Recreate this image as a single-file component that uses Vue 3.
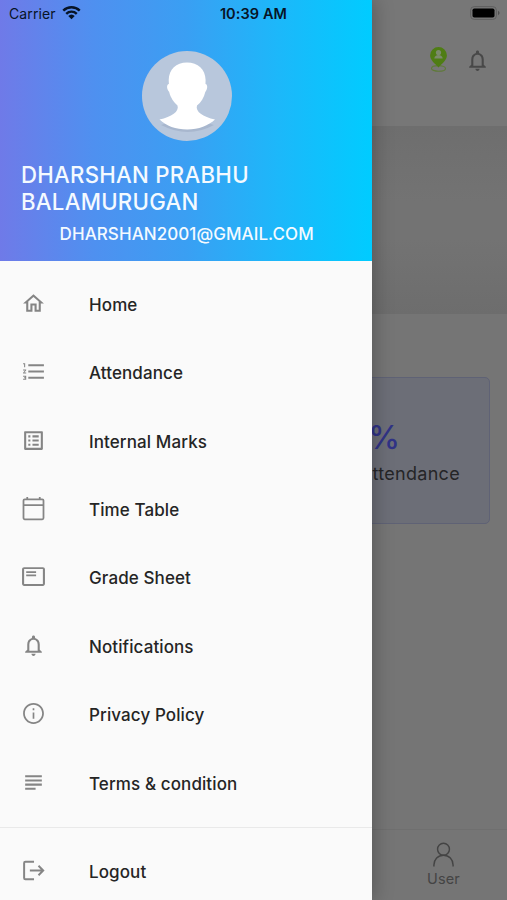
<script setup>
const menu = [
  { label: 'Home', paths: ['M12 5.69l5 4.5V18h-2v-6H9v6H7v-7.81l5-4.5M12 3L2 12h3v8h6v-6h2v6h6v-8h3L12 3z'] },
  { label: 'Attendance', paths: ['M2 17h2v.5H3v1h1v.5H2v1h3v-4H2v1zm1-9h1V4H2v1h1v3zm-1 3h1.8L2 13.1v.9h3v-1H3.2L5 10.9V10H2v1zm5-6v2h15V5H7zm0 14h15v-2H7v2zm0-6h15v-2H7v2z'] },
  { label: 'Internal Marks', paths: ['M19 5v14H5V5h14m1.1-2H3.9c-.5 0-.9.4-.9.9v16.2c0 .4.4.9.9.9h16.2c.4 0 .9-.5.9-.9V3.9c0-.5-.5-.9-.9-.9zM11 7h6v2h-6V7zm0 4h6v2h-6v-2zm0 4h6v2h-6v-2zM7 7h2v2H7zm0 4h2v2H7zm0 4h2v2H7z'] },
  { label: 'Time Table', line: 'M3.6 3.2h16.8a1.2 1.2 0 0 1 1.2 1.2v16.8a1.2 1.2 0 0 1-1.2 1.2H3.6a1.2 1.2 0 0 1-1.2-1.2V4.4a1.2 1.2 0 0 1 1.2-1.2zM2.4 8.7h19.2M6 .9v2.3M18 .9v2.3' },
  { label: 'Grade Sheet', paths: ['M21 3H3c-1.1 0-2 .9-2 2v14c0 1.1.9 2 2 2h18c1.1 0 2-.9 2-2V5c0-1.1-.9-2-2-2zm0 16.3H3V4.7h18v14.6zM5 10h9.5v1.7H5zm0-3h9.5v1.7H5z'] },
  { label: 'Notifications', paths: ['M12 22c1.1 0 2-.9 2-2h-4c0 1.1.9 2 2 2zm6-6v-5c0-3.07-1.63-5.64-4.5-6.32V4c0-.83-.67-1.5-1.5-1.5s-1.5.67-1.5 1.5v.68C7.64 5.36 6 7.92 6 11v5l-2 2v1h16v-1l-2-2zm-2 1H8v-6c0-2.48 1.51-4.5 4-4.5s4 2.02 4 4.5v6z'] },
  { label: 'Privacy Policy', paths: ['M11.2 7h1.6v1.8h-1.6zm0 4h1.6v6h-1.6zm.8-9C6.48 2 2 6.48 2 12s4.48 10 10 10 10-4.48 10-10S17.52 2 12 2zm0 18.3c-4.58 0-8.3-3.72-8.3-8.3s3.72-8.3 8.3-8.3 8.3 3.72 8.3 8.3-3.72 8.3-8.3 8.3z'] },
  { label: 'Terms & condition', paths: ['M14 17H4v2h10v-2zm6-8H4v2h16V9zM4 15h16v-2H4v2zM4 5v2h16V5H4z'] },
]
const logout = { label: 'Logout', line: 'M12.5 3.5H4.2a1.2 1.2 0 0 0-1.2 1.2v14.6a1.2 1.2 0 0 0 1.2 1.2h8.3M8.5 12h12.5M16.8 7.5l4.5 4.5-4.5 4.5' }
const bell = menu[5].paths[0]
</script>

<template>
  <div class="screen">
    <main class="page">
      <header class="topbar">
        <svg class="pin" viewBox="0 0 22 30">
          <ellipse cx="11" cy="24" rx="7.5" ry="3" fill="none" stroke="#5f7a38" stroke-width="1.2" />
          <path d="M11 1a9 9 0 0 0-9 9c0 5 4.5 8.5 9 13 4.5-4.5 9-8 9-13a9 9 0 0 0-9-9z" fill="#4f7d14" />
          <circle cx="11" cy="7" r="2.8" fill="#7c8a6c" />
          <path d="M6.5 13.5c0-5 9-5 9 0z" fill="#7c8a6c" />
        </svg>
        <svg class="top-bell" viewBox="0 0 24 24"><path :d="bell" /></svg>
      </header>
      <section class="banner"></section>
      <section class="content">
        <div class="card">
          <div class="percent">%</div>
          <div class="caption">Attendance</div>
        </div>
      </section>
      <nav class="tabs">
        <div class="tab">
          <svg class="user" viewBox="0 0 24 27">
            <circle cx="12" cy="7.5" r="6.2" />
            <path d="M2 25.5v-1.5c0-5.8 4.2-10.3 10-10.3s10 4.5 10 10.3v1.5" />
          </svg>
          <span>User</span>
        </div>
      </nav>
    </main>

    <aside class="drawer">
      <div class="profile">
        <svg class="avatar" viewBox="0 0 90 90">
          <circle cx="45" cy="45" r="45" fill="#b8c7dc" />
          <path d="M19 72q12-3 17-9h19q4 6 17 9-26 14-53 0z" fill="#a8b7ce" transform="translate(0 2)" />
          <path d="M45 11.5c-11 0-18 7-18.3 17.5l.2 4c-2.5.5-2.4 5 .3 8 1.3 6 5 10.5 8.3 13.5 2 6-6 11.5-18 14 7 6.5 16 10 27.7 10S66.5 74.5 73 68.5c-12-2.5-20-8-18-14 4-3 7-8 8.3-13.5 2.5-3 2.5-7.5.2-8l.1-4C63.4 18.5 56 11.5 45 11.5z" fill="#fff" />
        </svg>
        <h1>DHARSHAN PRABHU BALAMURUGAN</h1>
        <p>DHARSHAN2001@GMAIL.COM</p>
      </div>
      <ul class="menu">
        <li v-for="item in menu" :key="item.label">
          <svg class="icon" viewBox="0 0 24 24">
            <path v-for="d in item.paths" :key="d" :d="d" />
            <path v-if="item.line" class="line thin" :d="item.line" />
          </svg>
          <span>{{ item.label }}</span>
        </li>
      </ul>
      <hr />
      <ul class="menu last">
        <li>
          <svg class="icon" viewBox="0 0 24 24"><path class="line" :d="logout.line" /></svg>
          <span>{{ logout.label }}</span>
        </li>
      </ul>
    </aside>

    <div class="status">
      <div class="carrier">
        <span>Carrier</span>
        <svg class="wifi" viewBox="0 0 18 14">
          <path d="M1.2 5.2a11.3 11.3 0 0 1 15.6 0M4 8.2a7.2 7.2 0 0 1 10 0" fill="none" stroke="#071426" stroke-width="2.3" />
          <path d="M5.9 10.3a4.5 4.5 0 0 1 6.2 0L9 13.5z" fill="#071426" />
        </svg>
      </div>
      <strong>10:39 AM</strong>
      <svg class="battery" viewBox="0 0 30 14">
        <rect x=".6" y=".6" width="25.8" height="12.8" rx="3.6" fill="none" stroke="#5f5f5f" stroke-width="1" />
        <rect x="2.5" y="2.5" width="22" height="9" rx="1.8" fill="#000" />
        <path d="M28 4.8q3.2 2.2 0 4.4z" fill="#505050" />
      </svg>
    </div>
  </div>
</template>

<style>
body { margin: 0; }
</style>

<style scoped>
.screen {
  position: relative;
  width: 507px;
  height: 900px;
  overflow: hidden;
  font-family: Inter, "Liberation Sans", sans-serif;
}
.page {
  height: 100%;
  display: flex;
  flex-direction: column;
  background: #757575;
}
.topbar {
  height: 126px;
  box-sizing: border-box;
  display: flex;
  justify-content: flex-end;
  align-items: flex-start;
  gap: 17px;
  padding: 46px 17px 0 0;
  background: #777;
}
.pin { width: 21px; height: 28px; margin-right: -1px; }
.top-bell { width: 25px; height: 25px; margin-top: 1.5px; fill: #484848; }
.banner {
  height: 188px;
  background: linear-gradient(#6e6e6e 0%, #737373 40%, #737373 60%, #6d6d6d 100%);
}
.content { flex: 1; padding: 63px 17px 0 0; display: flex; justify-content: flex-end; align-items: flex-start; }
.card {
  width: 225px;
  height: 147px;
  box-sizing: border-box;
  border: 1px solid #5f6275;
  border-radius: 5px;
  background: #6c6e77;
  display: flex;
  flex-direction: column;
  align-items: flex-end;
  padding: 41px 29px 0 0;
}
.percent { font-size: 32px; line-height: 38px; font-weight: 500; color: #303386; margin-right: 60px; }
.caption { font-size: 18px; line-height: 24px; margin-top: 5px; letter-spacing: 0.3px; color: #252527; }
.tabs {
  height: 71px;
  box-sizing: border-box;
  display: flex;
  justify-content: flex-end;
  border-top: 1px solid #6f6f6f;
  background: #757575;
}
.tab {
  width: 127px;
  display: flex;
  flex-direction: column;
  align-items: center;
  padding-top: 12px;
  font-size: 14.5px;
  line-height: 19px;
  letter-spacing: 0.1px;
  color: #444;
}
.user { width: 23px; height: 26px; fill: none; stroke: #444; stroke-width: 1.5; }
.tab span { margin-top: 1px; }
.drawer {
  position: absolute;
  top: 0;
  left: 0;
  width: 372.4px;
  height: 100%;
  background: #fafafa;
  box-shadow: 2px 0 18px rgba(0, 0, 0, 0.25);
}
.profile {
  height: 260.6px;
  box-sizing: border-box;
  display: flex;
  flex-direction: column;
  align-items: center;
  padding: 51px 20px 0 21px;
  background: linear-gradient(90deg, #6f7ae8 0%, #4f90f0 25%, #3a9ff3 50%, #1cb8fa 75%, #00ccff 100%);
  color: #f4faff;
}
.avatar { width: 90px; height: 90px; flex: none; }
h1 {
  align-self: stretch;
  margin: 20px 0 0;
  padding-right: 60px;
  font-size: 22.2px;
  line-height: 27px;
  font-weight: 500;
  letter-spacing: 0.27px;
}
p { margin: 7px 0 0; font-size: 17px; line-height: 24px; font-weight: 500; letter-spacing: 0.07px; white-space: nowrap; }
.menu { list-style: none; margin: 0; padding: 9.6px 0 0; }
.menu li { display: flex; align-items: center; height: 68.4px; padding-left: 21px; }
.icon { width: 25px; height: 25px; margin: -2px 43px 0 0; fill: #858585; flex: none; }
.line { fill: none; stroke: #858585; stroke-width: 1.9; }
.thin { stroke-width: 1.7; }
.menu span { margin-top: 0.8px; font-size: 17px; line-height: 24px; font-weight: 500; letter-spacing: 0.1px; color: #252525; }
hr { margin: 9.4px 0 0; border: 0; height: 1px; background: #e9e9e9; }
.last { padding-top: 9.3px; }
.status {
  position: absolute;
  top: 0;
  left: 0;
  width: 100%;
  height: 27px;
  box-sizing: border-box;
  display: grid;
  grid-template-columns: 1fr auto 1fr;
  align-items: center;
  padding: 0 7px 0 9px;
  font-size: 14px;
  color: #071426;
}
.carrier { display: flex; align-items: center; gap: 6px; letter-spacing: 0.1px; }
.wifi { width: 19px; height: 15px; margin-top: -3px; }
.status strong { font-weight: 600; font-size: 14.5px; letter-spacing: 0.1px; margin-left: -2px; }
.battery { justify-self: end; width: 30px; height: 14px; margin-top: -1px; }
</style>
